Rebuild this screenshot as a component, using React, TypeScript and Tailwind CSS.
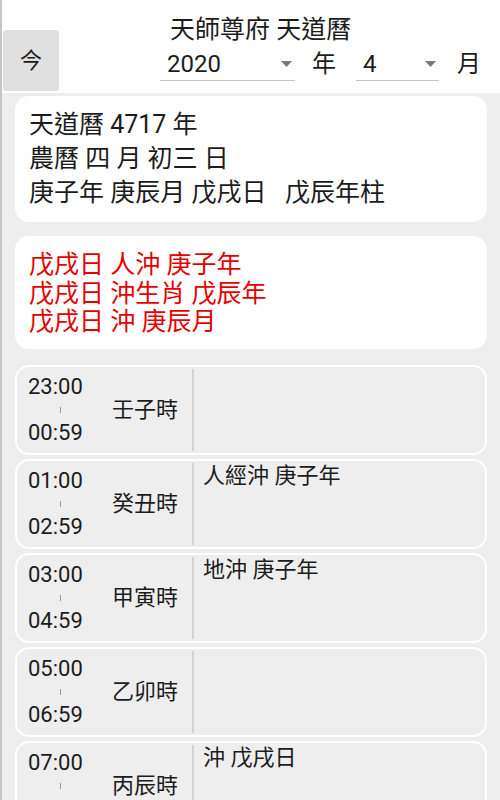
import React from "react";

// 十二時辰 rows
const hours: { from: string; to: string; name: string; note: string }[] = [
  { from: "23:00", to: "00:59", name: "壬子時", note: "" },
  { from: "01:00", to: "02:59", name: "癸丑時", note: "人經沖 庚子年" },
  { from: "03:00", to: "04:59", name: "甲寅時", note: "地沖 庚子年" },
  { from: "05:00", to: "06:59", name: "乙卯時", note: "" },
  { from: "07:00", to: "08:59", name: "丙辰時", note: "沖 戊戌日" },
  { from: "09:00", to: "10:59", name: "丁巳時", note: "" },
  { from: "11:00", to: "12:59", name: "戊午時", note: "" },
];

const font = { fontFamily: 'Roboto, "Noto Sans CJK TC", sans-serif' };

function Select({ value, width }: { value: string; width: string }) {
  return (
    <div className={`${width} h-[34px] flex items-center justify-between pl-[7px] pr-[3px] border-b border-[#c4c4c4]`}>
      <span className="text-[24px] leading-none">{value}</span>
      <svg width="11" height="6" viewBox="0 0 11 6">
        <path d="M0 0 L11 0 L5.5 6 Z" fill="#7a7a7a" />
      </svg>
    </div>
  );
}

function HourRow({ from, to, name, note }: { from: string; to: string; name: string; note: string }) {
  return (
    <div className="h-[90px] flex border-2 border-white rounded-[14px] bg-[#eeeeee]">
      <div className="w-[175px] flex items-center pl-[11px]">
        <div className="w-[55px] flex flex-col text-[22px] leading-[23px]">
          <span>{from}</span>
          <span className="h-[23px] flex items-center pl-[32px]">
            <span className="w-px h-[6px] bg-[#9a9a9a]" />
          </span>
          <span>{to}</span>
        </div>
        <span className="ml-[29px] text-[22px]">{name}</span>
      </div>
      <div className="my-[2px] w-[2px] bg-[#d2d2d2]" />
      <div className="flex-1 pl-[9px] pt-[1px] text-[22px] leading-[28px]">{note}</div>
    </div>
  );
}

export default function App() {
  return (
    <div className="h-[800px] overflow-hidden bg-[#eeeeee] border-l-2 border-[#c6c6c6] text-[#1c1c1c]" style={font}>
      {/* Header */}
      <div className="h-[93px] bg-white flex items-end">
        <div className="ml-[1px] mb-[2px] w-[56px] h-[61px] rounded-[3px] bg-[#e0e0e0] flex items-center justify-center text-[22px]">
          今
        </div>
        <div className="ml-[101px] h-[93px] flex flex-col pt-[14px]">
          <div className="pl-[10px] text-[25px] leading-[32px]">天師尊府 天道曆</div>
          <div className="flex items-center">
            <Select value="2020" width="w-[135px]" />
            <span className="ml-[17px] text-[24px]">年</span>
            <div className="ml-[20px]">
              <Select value="4" width="w-[83px]" />
            </div>
            <span className="ml-[18px] text-[24px]">月</span>
          </div>
        </div>
      </div>

      {/* Body */}
      <div className="px-[13px] pt-[3px] flex flex-col">
        <div className="bg-white rounded-[14px] px-[14px] py-[12px] text-[25px] leading-[34px]">
          <div>天道曆 4717 年</div>
          <div>農曆 四 月 初三 日</div>
          <div className="whitespace-pre">庚子年 庚辰月 戊戌日   戊辰年柱</div>
        </div>

        <div className="mt-[14px] bg-white rounded-[14px] px-[14px] pt-[15px] pb-[12px] text-[25px] leading-[28.5px] text-[#e50000]">
          <div>戊戌日 人沖 庚子年</div>
          <div>戊戌日 沖生肖 戊辰年</div>
          <div>戊戌日 沖 庚辰月</div>
        </div>

        <div className="mt-[16px] flex flex-col gap-[4px]">
          {hours.map((h) => (
            <HourRow key={h.name} {...h} />
          ))}
        </div>
      </div>
    </div>
  );
}
